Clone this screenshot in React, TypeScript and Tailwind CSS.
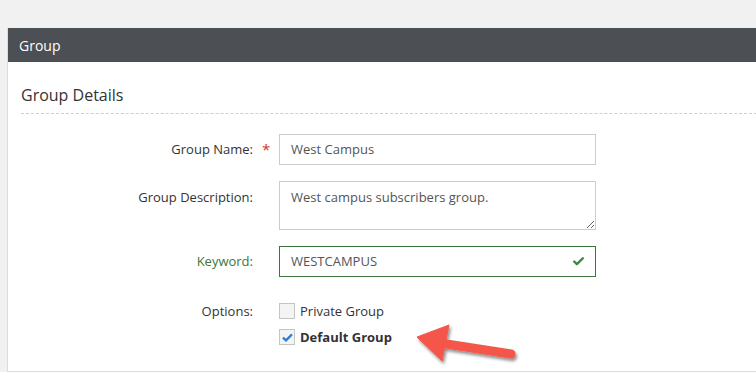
import { Check } from "lucide-react";

const font = { fontFamily: '"Open Sans", "Noto Sans", Arial, sans-serif' };

function CheckBox({ checked }: { checked?: boolean }) {
	return (
		<span className="w-[16px] h-[16px] border border-[#c4c4c4] bg-[#f4f4f4] flex items-center justify-center shrink-0">
			{checked && (
				<svg width="11" height="9" viewBox="0 0 11 9">
					<path d="M1 4.6 L4 7.4 L10 1.4" fill="none" stroke="#2f7bd1" strokeWidth="2.2" />
				</svg>
			)}
		</span>
	);
}

export default function App() {
	return (
		<div
			className="relative w-[756px] h-[372px] overflow-hidden bg-[#f1f1f1]"
			style={font}
		>
			<div className="ml-[7px] mt-[28px] w-[760px] border-l border-b border-[#dcdcdc] bg-white pb-[26px]">
				<div className="h-[34px] bg-[#4c4f54] flex items-center pl-[11px] text-[14px] text-white">
					Group
				</div>

				<div className="ml-[13px] pt-[21px] pb-[6px] border-b border-dashed border-[#cfcfcf]">
					<h2 className="text-[16px] leading-[24px] text-[#333]">Group Details</h2>
				</div>

				<div className="mt-[20px] flex flex-col text-[13px] text-[#333]">
					<div className="flex items-center">
						<label className="w-[245px] text-right">Group Name:</label>
						<span className="w-[26px] pl-[9px] text-[#d9302c] text-[15px] leading-none">*</span>
						<div className="w-[317px] h-[31px] border border-[#cccccc] flex items-center pl-[11px] text-[#555]">
							West Campus
						</div>
					</div>

					<div className="flex items-start mt-[16px]">
						<label className="w-[245px] text-right pt-[7px]">Group Description:</label>
						<span className="w-[26px]" />
						<textarea
							readOnly
							defaultValue="West campus subscribers group."
							className="w-[317px] h-[49px] border border-[#cccccc] pl-[11px] pt-[6px] text-[#555] text-[13px] outline-none resize-y"
							style={font}
						/>
					</div>

					<div className="flex items-center mt-[16px]">
						<label className="w-[245px] text-right text-[#3c763d]">Keyword:</label>
						<span className="w-[26px]" />
						<div className="w-[317px] h-[31px] border border-[#3c763d] flex items-center justify-between pl-[11px] pr-[10px] text-[#555]">
							<span>WESTCAMPUS</span>
							<Check size={13} strokeWidth={4.5} className="text-[#3a8a3d]" />
						</div>
					</div>

					<div className="flex items-start mt-[26px]">
						<label className="w-[245px] text-right leading-[16px]">Options:</label>
						<span className="w-[26px]" />
						<div className="flex flex-col gap-[10px]">
							<div className="flex items-center gap-[5px] leading-[16px]">
								<CheckBox />
								<span>Private Group</span>
							</div>
							<div className="flex items-center gap-[5px] leading-[16px]">
								<CheckBox checked />
								<span className="font-bold">Default Group</span>
							</div>
						</div>
					</div>
				</div>
			</div>

			<svg className="absolute left-0 top-0 pointer-events-none" width="756" height="372">
				<defs>
					<filter id="sh" x="-20%" y="-40%" width="140%" height="180%">
						<feDropShadow dx="1.5" dy="2.5" stdDeviation="1.6" floodColor="#000" floodOpacity="0.45" />
					</filter>
				</defs>
				<g filter="url(#sh)" fill="#f4574a" stroke="#f4574a">
					<line x1="440" y1="343" x2="511" y2="354" strokeWidth="9" strokeLinecap="round" />
					<polygon points="417,337 449,325 442,361" strokeWidth="1" strokeLinejoin="round" />
				</g>
			</svg>
		</div>
	);
}
